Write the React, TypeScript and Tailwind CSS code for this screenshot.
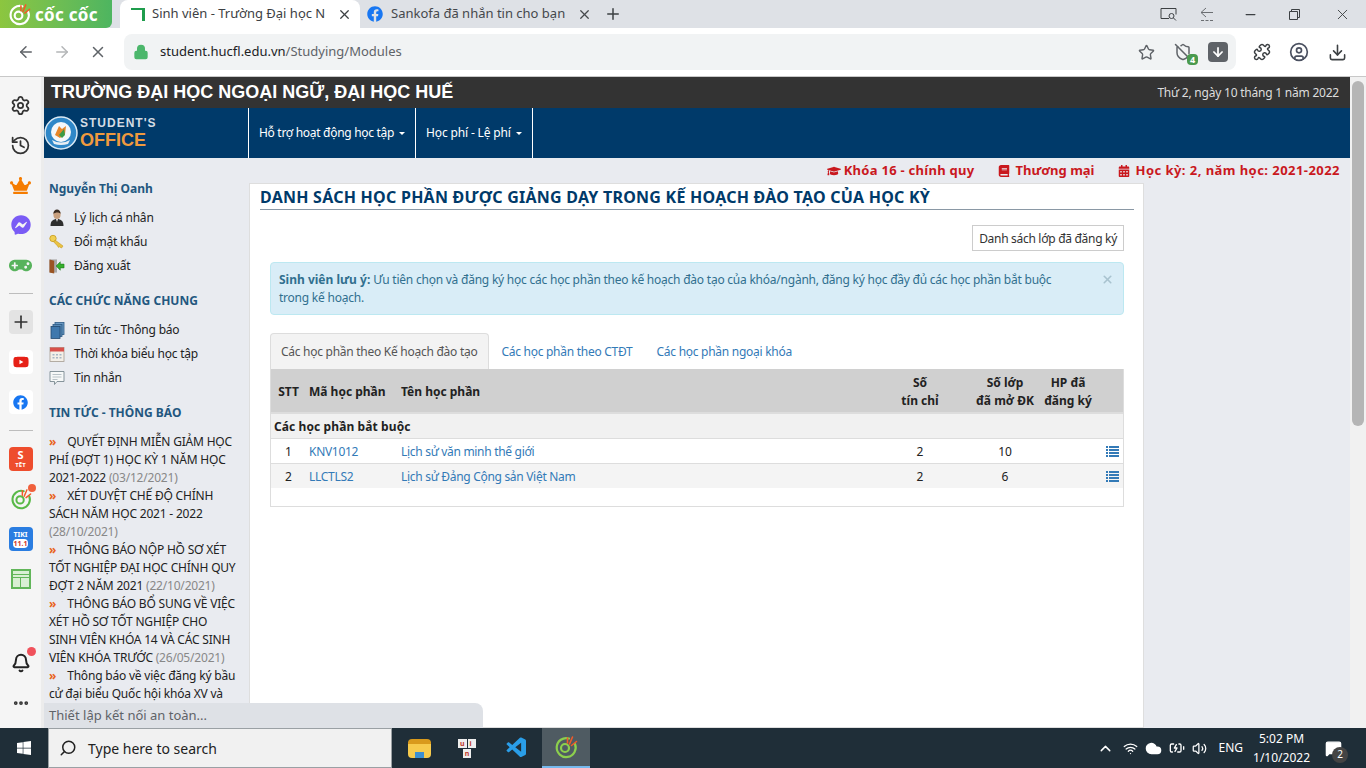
/**
 * App.tsx — Cốc Cốc browser window showing the HUCFL Student's Office modules page.
 */
import {
  ArrowDown,
  ArrowLeft,
  ArrowRight,
  Bell,
  ChevronUp,
  Cloud,
  Download,
  Ellipsis,
  History,
  Lock,
  MessageSquare,
  Minus,
  Plus,
  Search,
  Settings,
  ShieldOff,
  Star,
  UserCircle,
  Volume2,
  Wifi,
  X,
  Puzzle,
  BatteryCharging,
} from 'lucide-react';
import { FaFacebook, FaFacebookMessenger, FaWindows, FaYoutube, FaBook, FaCalendarAlt, FaGraduationCap, FaCrown, FaGamepad } from 'react-icons/fa';
import { VscVscode } from 'react-icons/vsc';

// ── Data ──────────────────────────────────────────────────────────────────────

const news = [
  { lines: ['QUYẾT ĐỊNH MIỄN GIẢM HỌC', 'PHÍ (ĐỢT 1) HỌC KỲ 1 NĂM HỌC', '2021-2022'], date: '(03/12/2021)', dateOwnLine: false },
  { lines: ['XÉT DUYỆT CHẾ ĐỘ CHÍNH', 'SÁCH NĂM HỌC 2021 - 2022'], date: '(28/10/2021)', dateOwnLine: true },
  { lines: ['THÔNG BÁO NỘP HỒ SƠ XÉT', 'TỐT NGHIỆP ĐẠI HỌC CHÍNH QUY', 'ĐỢT 2 NĂM 2021'], date: '(22/10/2021)', dateOwnLine: false },
  { lines: ['THÔNG BÁO BỔ SUNG VỀ VIỆC', 'XÉT HỒ SƠ TỐT NGHIỆP CHO', 'SINH VIÊN KHÓA 14 VÀ CÁC SINH', 'VIÊN KHÓA TRƯỚC'], date: '(26/05/2021)', dateOwnLine: false },
  { lines: ['Thông báo về việc đăng ký bầu', 'cử đại biểu Quốc hội khóa XV và'], date: '', dateOwnLine: false },
];

// ── Small drawings ────────────────────────────────────────────────────────────

function CocCocMark({ size = 20, color = '#fff' }: { size?: number; color?: string }) {
  return (
    <svg width={size} height={size} viewBox="0 0 24 24" fill="none" aria-hidden="true">
      <path d="M15 3.5A9.5 9.5 0 1 0 21 9" stroke={color} strokeWidth="2.2" strokeLinecap="round" />
      <circle cx="11" cy="13" r="4" stroke={color} strokeWidth="2.2" />
      <path d="M15.5 9l3-7M17.5 10.5l5-4M13.5 8l0-5" stroke="#f15a29" strokeWidth="1.6" strokeLinecap="round" />
    </svg>
  );
}

function SchoolLogo() {
  return (
    <svg width="34" height="34" viewBox="0 0 34 34" aria-hidden="true" className="shrink-0">
      <circle cx="17" cy="17" r="16" fill="#2f87c8" stroke="#dbeaf5" strokeWidth="1.5" />
      <circle cx="17" cy="16" r="10" fill="#f4f7fa" />
      <path d="M11 19l4-9 3 3 4-3-1 8-5 4z" fill="#e8862a" />
      <path d="M15 19l5-6 1 6-3 3z" fill="#3b9b45" />
      <path d="M8 24q9 5 18 0l-2 4q-7 2-14 0z" fill="#e9eef3" />
    </svg>
  );
}

function PersonIcon() {
  return (
    <svg width="16" height="18" viewBox="0 0 16 18" aria-hidden="true">
      <path d="M1.5 17c0-5 2.5-7 6.5-7s6.5 2 6.5 7z" fill="#2e2e2e" />
      <ellipse cx="8" cy="5.5" rx="3.6" ry="4.5" fill="#c9a07e" />
      <path d="M4.4 5c0-3 1.6-4.5 3.6-4.5s3.6 1.5 3.6 4.5c-1-2-5.5-2-7.2 0z" fill="#3a2c22" />
      <path d="M7 10l1 3 1-3z" fill="#eee" />
    </svg>
  );
}

function KeyIcon() {
  return (
    <svg width="16" height="16" viewBox="0 0 16 16" aria-hidden="true">
      <circle cx="4" cy="4.5" r="3.2" fill="#f0cf52" stroke="#c79a1e" strokeWidth="0.8" />
      <path d="M6 6l8 6-1.5 2-2-1.2-1 .6-1-1.5L4.800 8z" fill="#e9c243" stroke="#c79a1e" strokeWidth="0.6" />
    </svg>
  );
}

function DoorIcon() {
  return (
    <svg width="17" height="16" viewBox="0 0 17 16" aria-hidden="true">
      <path d="M0.5 1h8v14h-8z" fill="#a9a9a9" />
      <path d="M0.5 1l5 1.5V16l-5-1z" fill="#9a5423" />
      <path d="M16 6h-4V3.5L7.5 8l4.5 4.5V10h4z" fill="#35b02c" stroke="#1f7a1a" strokeWidth="0.6" />
    </svg>
  );
}

function BooksIcon() {
  return (
    <svg width="15" height="17" viewBox="0 0 15 17" aria-hidden="true">
      <rect x="5" y="0.5" width="9" height="12" fill="#6c9ac4" stroke="#2c5a85" strokeWidth="0.8" />
      <rect x="3" y="2.5" width="9" height="12" fill="#5789b6" stroke="#2c5a85" strokeWidth="0.8" />
      <rect x="1" y="4.5" width="9" height="12" fill="#3f78ad" stroke="#234a70" strokeWidth="0.8" />
    </svg>
  );
}

function CalendarIcon() {
  return (
    <svg width="16" height="16" viewBox="0 0 16 16" aria-hidden="true">
      <rect x="1" y="1.5" width="14" height="14" fill="#f3efe8" stroke="#a59c91" strokeWidth="0.8" />
      <rect x="1" y="1.5" width="14" height="4" fill="#d8504b" />
      <path d="M3.5 8h2v1.5h-2zM7 8h2v1.5H7zM10.5 8h2v1.5h-2zM3.5 11h2v1.5h-2zM7 11h2v1.5H7zM10.5 11h2v1.5h-2z" fill="#a7b6c4" />
    </svg>
  );
}

function ChatIcon() {
  return (
    <svg width="16" height="16" viewBox="0 0 16 16" fill="none" aria-hidden="true">
      <path d="M1 1.5h14v10H8l-2.5 3v-3H1z" fill="#f6f8f8" stroke="#7b8a92" strokeWidth="0.9" />
      <path d="M3.5 4.5h9M3.5 7h9M3.5 9.5h5" stroke="#aab4ba" strokeWidth="0.8" />
    </svg>
  );
}

function ListGlyph() {
  return (
    <svg width="13" height="11" viewBox="0 0 13 11" fill="#337ab7" aria-hidden="true" className="ml-auto mr-[4px]">
      <path d="M0 0h2v2H0zM3 0h10v2H3zM0 3h2v2H0zM3 3h10v2H3zM0 6h2v2H0zM3 6h10v2H3zM0 9h2v2H0zM3 9h10v2H3z" />
    </svg>
  );
}

function SidebarAppIcon({ children }: { children: React.ReactNode }) {
  return <div className="flex h-10 w-[41px] shrink-0 items-center justify-center">{children}</div>;
}

function SidebarDivider() {
  return (
    <div className="flex h-[17px] w-[41px] shrink-0 items-center justify-center">
      <div className="h-px w-6 bg-[#bdbdbd]" />
    </div>
  );
}

// ── Browser chrome ────────────────────────────────────────────────────────────

function TabStrip() {
  return (
    <div className="flex h-[28px] shrink-0 items-stretch bg-[#dee1e6] text-[13px]">
      <div className="flex w-[112px] items-center gap-[4px] rounded-br-md bg-gradient-to-r from-[#8cc63f] to-[#4db560] pl-2 text-white">
        <CocCocMark size={23} />
        <span className="whitespace-nowrap text-[17px] font-bold leading-none tracking-[0.3px]">cốc cốc</span>
      </div>
      <div className="ml-2 flex w-[240px] items-center rounded-t-lg bg-white pl-[11px] pr-2 text-[#3c4043]">
        <span className="mr-[7px] h-[13px] w-[14px] border-r-[3px] border-t-[2px] border-[#1f9d4d]" />
        <span className="w-[175px] overflow-hidden whitespace-nowrap">Sinh viên - Trường Đại học N</span>
        <X size={15} className="ml-auto text-[#3c4043]" />
      </div>
      <div className="flex w-[240px] items-center pl-[7px] pr-2 text-[#45484c]">
        <FaFacebook size={16} className="mr-[8px] text-[#1877f2]" />
        <span className="w-[180px] overflow-hidden whitespace-nowrap">Sankofa đã nhắn tin cho bạn</span>
        <X size={15} className="ml-auto text-[#45484c]" />
      </div>
      <div className="flex w-[26px] items-center justify-center">
        <Plus size={18} className="text-[#3c4043]" />
      </div>
      <div className="ml-auto flex items-center text-[#3c4043]">
        {/* Screen search */}
        <svg width="17" height="15" viewBox="0 0 17 15" fill="none" stroke="currentColor" strokeWidth="1" className="mr-[23px]" aria-hidden="true">
          <path d="M9 11.5H1V1.5h15v6" />
          <circle cx="11.5" cy="9" r="2.5" />
          <path d="M13.5 11l2.5 2.5" />
        </svg>
        {/* Back with dashes */}
        <svg width="14" height="15" viewBox="0 0 14 15" fill="none" stroke="#6b6e72" strokeWidth="1" className="mr-[29px]" aria-hidden="true">
          <path d="M6 1L1 5.5l5 4.5M1 5.5h12M1 13.5h3M5.5 13.5h3M10 13.5h3" />
        </svg>
        <Minus size={15} className="mr-[31px]" />
        {/* Restore */}
        <svg width="11" height="11" viewBox="0 0 11 11" fill="none" stroke="currentColor" strokeWidth="1" className="mr-[34px]" aria-hidden="true">
          <path d="M0.5 2.5h8v8h-8zM2.5 2.5v-2h8v8h-2" />
        </svg>
        <X size={17} className="mr-[15px]" strokeWidth={1.3} />
      </div>
    </div>
  );
}

function Toolbar() {
  return (
    <div className="flex h-[49px] shrink-0 items-center border-b border-[#c8c8c8] bg-white text-[#5f6368]">
      <ArrowLeft size={18} className="ml-[17px]" />
      <ArrowRight size={18} className="ml-[18px] text-[#b4b6b8]" />
      <X size={18} className="ml-[18px]" />
      <div className="ml-[17px] flex h-9 w-[1112px] items-center rounded-lg bg-[#f1f3f4] pl-[9px]">
        <Lock size={16} className="text-[#4cb76c]" fill="#4cb76c" />
        <span className="ml-[11px] text-[13px]">
          <span className="text-[#202124]">student.hucfl.edu.vn</span>
          <span className="text-[#5f6368]">/Studying/Modules</span>
        </span>
        <Star size={17} className="ml-auto mr-[19px]" />
        <div className="relative mr-[16px]">
          <ShieldOff size={18} />
          <span className="absolute -bottom-1 -right-[6px] flex h-[11px] w-[11px] items-center justify-center rounded-sm bg-[#4a9a4e] text-[9px] font-bold text-white">4</span>
        </div>
        <div className="mr-[8px] flex h-5 w-5 items-center justify-center rounded-sm bg-[#5f6368]">
          <ArrowDown size={14} className="text-white" strokeWidth={3} />
        </div>
      </div>
      <Puzzle size={18} className="ml-[17px] text-[#3c4043]" />
      <UserCircle size={20} className="ml-[18px] text-[#4a5060]" />
      <Download size={19} className="ml-[19px] text-[#3c4043]" />
    </div>
  );
}

function AppRail() {
  return (
    <div className="flex w-[44px] shrink-0 flex-col border-r-[3px] border-[#ececec] bg-[#f5f5f5] pb-[5px] pt-[8px] text-[#333]">
      <SidebarAppIcon><Settings size={21} /></SidebarAppIcon>
      <SidebarAppIcon><History size={21} /></SidebarAppIcon>
      <SidebarAppIcon><FaCrown size={21} className="text-[#f57c00]" /></SidebarAppIcon>
      <SidebarAppIcon><FaFacebookMessenger size={20} className="text-[#7a5cf5]" /></SidebarAppIcon>
      <SidebarAppIcon><FaGamepad size={23} className="text-[#58b35c]" /></SidebarAppIcon>
      <SidebarDivider />
      <SidebarAppIcon>
        <div className="flex h-6 w-6 items-center justify-center rounded bg-[#e3e3e3]"><Plus size={20} /></div>
      </SidebarAppIcon>
      <SidebarAppIcon>
        <div className="flex h-6 w-6 items-center justify-center rounded bg-white"><FaYoutube size={16} className="text-[#e62117]" /></div>
      </SidebarAppIcon>
      <SidebarAppIcon>
        <div className="flex h-6 w-6 items-center justify-center rounded bg-white"><FaFacebook size={15} className="text-[#1877f2]" /></div>
      </SidebarAppIcon>
      <SidebarDivider />
      <SidebarAppIcon>
        <div className="flex h-6 w-6 flex-col items-center justify-center rounded bg-[#ee4d2d] text-[6px] font-bold leading-[8px] text-white">
          <span className="text-[11px] leading-[12px]">S</span>
          <span>TẾT</span>
        </div>
      </SidebarAppIcon>
      <SidebarAppIcon>
        <div className="relative">
          <CocCocMark size={22} color="#58b947" />
          <span className="absolute -right-1 -top-1 h-2 w-2 rounded-full bg-[#f0603c]" />
        </div>
      </SidebarAppIcon>
      <SidebarAppIcon>
        <div className="flex h-6 w-6 flex-col items-center justify-center rounded bg-[#2a7de1] text-[7px] font-bold leading-[9px] text-white">
          <span>TIKI</span>
          <span className="rounded-sm bg-white px-px text-[#d0342c]">11.1</span>
        </div>
      </SidebarAppIcon>
      <SidebarAppIcon>
        <div className="flex h-5 w-5 flex-col gap-px bg-[#62b65a] p-[2px]">
          <div className="h-[3px] bg-[#d9efd4]" />
          <div className="h-[2px] bg-[#d9efd4]" />
          <div className="flex flex-1 gap-px">
            <div className="flex-1 bg-[#d9efd4]" />
            <div className="flex-1 bg-[#d9efd4]" />
          </div>
        </div>
      </SidebarAppIcon>
      <div className="flex-1" />
      <SidebarAppIcon>
        <div className="relative">
          <Bell size={20} className="text-[#222]" strokeWidth={2.4} />
          <span className="absolute -right-[5px] -top-[6px] h-[9px] w-[9px] rounded-full bg-[#f0525c]" />
        </div>
      </SidebarAppIcon>
      <SidebarAppIcon><Ellipsis size={18} strokeWidth={3} /></SidebarAppIcon>
    </div>
  );
}

// ── Site header ───────────────────────────────────────────────────────────────

function SiteHeader() {
  return (
    <>
      <div className="flex h-[31px] shrink-0 items-center justify-between bg-[#333] pl-[7px] pr-[11px]">
        <span className="text-[18px] font-bold text-white font-['Liberation_Sans',sans-serif]">TRƯỜNG ĐẠI HỌC NGOẠI NGỮ, ĐẠI HỌC HUẾ</span>
        <span className="text-[12px] tracking-[-0.22px] text-[#ddd]">Thứ 2, ngày 10 tháng 1 năm 2022</span>
      </div>
      <div className="flex h-[50px] shrink-0 bg-[#003a6a] text-[12px] text-white">
        <div className="flex w-[204px] items-center">
          <SchoolLogo />
          <div className="ml-[2px] flex flex-col font-['Liberation_Sans',sans-serif] font-bold">
            <span className="text-[12px] leading-[14px] tracking-[1px] text-[#d5dce4]">STUDENT'S</span>
            <span className="text-[18px] leading-[21px] text-[#f09a3e]">OFFICE</span>
          </div>
        </div>
        <div className="flex items-center border-x border-white px-[10px] tracking-[-0.3px]">
          Hỗ trợ hoạt động học tập
          <span className="ml-[5px] mt-[1px] border-x-[3px] border-t-[3px] border-x-transparent border-t-white" />
        </div>
        <div className="flex items-center border-r border-white px-[10px] tracking-[-0.15px]">
          Học phí - Lệ phí
          <span className="ml-[5px] mt-[1px] border-x-[3px] border-t-[3px] border-x-transparent border-t-white" />
        </div>
      </div>
      <div className="flex h-[25px] shrink-0 items-center justify-end gap-[24px] pr-[10px] text-[13px] font-bold text-[#c9181e]">
        <span className="flex items-center gap-[3px] tracking-[0.27px]"><FaGraduationCap size={14} /> Khóa 16 - chính quy</span>
        <span className="flex items-center gap-[5px]"><FaBook size={12} /> Thương mại</span>
        <span className="flex items-center gap-[5px] tracking-[0.45px]"><FaCalendarAlt size={12} /> Học kỳ: 2, năm học: 2021-2022</span>
      </div>
    </>
  );
}

// ── Left column ───────────────────────────────────────────────────────────────

function LeftColumn() {
  return (
    <div className="-mt-[3px] w-[205px] shrink-0 overflow-hidden pl-[5px] text-[12px] tracking-[-0.2px] text-[#222]">
      <div className="text-[12px] font-bold leading-[18px] tracking-normal text-[#23577f]">Nguyễn Thị Oanh</div>
      <ul className="mt-[11px] flex flex-col gap-[6px]">
        <li className="flex h-[18px] items-center gap-[9px]">
          <span className="flex w-4 justify-center"><PersonIcon /></span>Lý lịch cá nhân
        </li>
        <li className="flex h-[18px] items-center gap-[9px]">
          <span className="flex w-4 justify-center"><KeyIcon /></span>Đổi mật khẩu
        </li>
        <li className="flex h-[18px] items-center gap-[9px]">
          <span className="flex w-4 justify-center"><DoorIcon /></span>Đăng xuất
        </li>
      </ul>
      <div className="mt-[17px] text-[12px] font-bold leading-[18px] tracking-normal text-[#23577f]">CÁC CHỨC NĂNG CHUNG</div>
      <ul className="mt-[11px] flex flex-col gap-[6px]">
        <li className="flex h-[18px] items-center gap-[9px]">
          <span className="flex w-4 justify-center"><BooksIcon /></span>Tin tức - Thông báo
        </li>
        <li className="flex h-[18px] items-center gap-[9px]">
          <span className="flex w-4 justify-center"><CalendarIcon /></span>Thời khóa biểu học tập
        </li>
        <li className="flex h-[18px] items-center gap-[9px]">
          <span className="flex w-4 justify-center"><ChatIcon /></span>Tin nhắn
        </li>
      </ul>
      <div className="mt-[17px] text-[12px] font-bold leading-[18px] tracking-normal text-[#23577f]">TIN TỨC - THÔNG BÁO</div>
      <div className="mt-[11px] leading-[18px]">
        {news.map((item) => (
          <div key={item.lines[0]}>
            {item.lines.map((line, i) => (
              <div key={line} className="whitespace-nowrap">
                {i === 0 && <span className="mr-[11px] font-bold text-[#e8641b]">»</span>}
                {line}
                {i === item.lines.length - 1 && !item.dateOwnLine && item.date && (
                  <span className="text-[#888]"> {item.date}</span>
                )}
              </div>
            ))}
            {item.dateOwnLine && <div className="text-[#888]">{item.date}</div>}
          </div>
        ))}
      </div>
    </div>
  );
}

// ── Main panel ────────────────────────────────────────────────────────────────

function ModulesPanel() {
  const cellLink = 'text-[#337ab7] tracking-[-0.3px]';
  return (
    <div className="w-[895px] shrink-0 border border-[#dedede] bg-white pl-[10px] pr-[9px] pt-[2px] text-[12px]">
      <h1 className="border-b border-[#8a98a5] pb-[1px] text-[16px] font-bold leading-[22px] tracking-[0.25px] text-[#003a6a]">
        DANH SÁCH HỌC PHẦN ĐƯỢC GIẢNG DẠY TRONG KẾ HOẠCH ĐÀO TẠO CỦA HỌC KỲ
      </h1>
      <div className="mr-[10px] mt-[15px] flex justify-end">
        <span className="flex h-[26px] items-center border border-[#ccc] px-[6px] pt-px tracking-[-0.3px] text-[#333]">Danh sách lớp đã đăng ký</span>
      </div>
      <div className="relative mx-[10px] mt-[11px] h-[53px] rounded-sm border border-[#bce8f1] bg-[#d9edf7] pl-2 pt-[8px] leading-[18px] tracking-[-0.23px] text-[#31708f]">
        <b className="tracking-normal">Sinh viên lưu ý:</b> Ưu tiên chọn và đăng ký học các học phần theo kế hoạch đào tạo của khóa/ngành, đăng ký học đầy đủ các học phần bắt buộc
        <br />
        trong kế hoạch.
        <X size={13} className="absolute right-[9px] top-[10px] text-[#a8c3cf]" strokeWidth={3} />
      </div>
      <div className="mx-[10px] mt-[18px] flex h-[36px] items-center tracking-[-0.27px] text-[#337ab7]">
        <span className="flex h-full items-center rounded-t-sm border border-b-0 border-[#ddd] bg-[#f3f3f3] pl-[10px] pr-[11px] pt-px text-[#555]">Các học phần theo Kế hoạch đào tạo</span>
        <span className="px-[12px] pt-px">Các học phần theo CTĐT</span>
        <span className="px-[12px] pt-px">Các học phần ngoại khóa</span>
      </div>
      <div className="mx-[10px] border border-t-0 border-[#ddd]">
        <table className="w-full table-fixed border-collapse text-[#222] [&_td]:pt-[2px] [&_th]:pt-[2px]">
          <thead>
            <tr className="h-[44px] border-b-2 border-[#ddd] bg-[#d0d0d0]">
              <th className="w-[35px] text-center font-bold">STT</th>
              <th className="w-[95px] pl-[3px] text-left font-bold">Mã học phần</th>
              <th className="text-left font-bold">Tên học phần</th>
              <th className="w-[94px] text-center font-bold">Số<br />tín chỉ</th>
              <th className="w-[76px] text-center font-bold">Số lớp<br />đã mở ĐK</th>
              <th className="w-[52px] pr-[2px] text-center font-bold">HP đã<br />đăng ký</th>
              <th className="w-[28px]" />
            </tr>
          </thead>
          <tbody>
            <tr className="h-[25px] border-b border-[#ddd] bg-[#f1f1f1]">
              <td colSpan={7} className="pl-[3px] font-bold tracking-[0.1px]">Các học phần bắt buộc</td>
            </tr>
            <tr className="h-[25px] border-b border-[#ddd]">
              <td className="text-center">1</td>
              <td className={`pl-[3px] ${cellLink}`}>KNV1012</td>
              <td className={cellLink}>Lịch sử văn minh thế giới</td>
              <td className="text-center">2</td>
              <td className="text-center">10</td>
              <td />
              <td><ListGlyph /></td>
            </tr>
            <tr className="h-[25px] bg-[#f4f4f4]">
              <td className="text-center">2</td>
              <td className={`pl-[3px] ${cellLink}`}>LLCTLS2</td>
              <td className={cellLink}>Lịch sử Đảng Cộng sản Việt Nam</td>
              <td className="text-center">2</td>
              <td className="text-center">6</td>
              <td />
              <td><ListGlyph /></td>
            </tr>
            <tr className="h-[18px]"><td colSpan={7} /></tr>
          </tbody>
        </table>
      </div>
    </div>
  );
}

// ── Taskbar ───────────────────────────────────────────────────────────────────

function Taskbar() {
  return (
    <div className="flex h-10 shrink-0 items-stretch bg-[#1f2e38] text-white">
      <div className="flex w-[48px] items-center justify-center">
        <FaWindows size={16} />
      </div>
      <div className="flex w-[344px] items-center border border-[#9aa0a4] bg-[#f1f1f1] pl-[10px] text-[14px] text-[#222]">
        <Search size={18} className="mr-[11px] -scale-x-100" />
        Type here to search
      </div>
      <div className="ml-[3px] flex w-[48px] items-center justify-center">
        <span className="relative h-[19px] w-[23px] rounded-sm border-t-[5px] border-[#d99a1c] bg-[#f7cb4d]">
          <span className="absolute bottom-0 left-[7px] h-[6px] w-[9px] bg-[#3d8fd1]" />
        </span>
      </div>
      <div className="flex w-[48px] items-center justify-center">
        <span className="grid grid-cols-2 gap-px text-[7px] font-bold leading-[9px] text-[#c0392b]">
          <span className="bg-[#eee] px-[2px]">u</span>
          <span className="bg-[#eee] px-[2px]">i</span>
          <span className="col-span-2 mx-auto bg-[#eee] px-[2px]">n</span>
        </span>
      </div>
      <div className="flex w-[51px] items-center justify-center">
        <VscVscode size={24} className="text-[#2a9ee8]" />
      </div>
      <div className="flex w-[48px] items-center justify-center border-b-2 border-[#76b9ed] bg-[#4f5b62]">
        <CocCocMark size={24} color="#8ccf4d" />
      </div>
      <div className="ml-auto flex items-center">
        <ChevronUp size={17} className="mr-[9px]" />
        <Wifi size={15} className="mr-[7px]" />
        <Cloud size={17} className="mr-[7px]" fill="#fff" />
        <BatteryCharging size={16} className="mr-[7px]" />
        <Volume2 size={15} className="mr-[11px]" />
        <span className="mr-[10px] text-[12px]">ENG</span>
        <div className="mr-[15px] flex flex-col items-end text-center text-[12px] leading-[19px]">
          <span className="w-full">5:02 PM</span>
          <span>1/10/2022</span>
        </div>
        <div className="relative mr-[24px]">
          <MessageSquare size={17} fill="#fff" />
          <span className="absolute -bottom-[6px] -right-[6px] flex h-4 w-4 items-center justify-center rounded-full bg-[#444] text-[10px]">2</span>
        </div>
      </div>
    </div>
  );
}

// ── Page ──────────────────────────────────────────────────────────────────────

export default function App() {
  return (
    <div className="flex h-[768px] w-[1366px] flex-col overflow-hidden bg-white font-['Noto_Sans',sans-serif]">
      <TabStrip />
      <Toolbar />
      <div className="relative flex min-h-0 flex-1">
        <AppRail />
        <div className="flex min-w-0 flex-1 flex-col bg-[#e9ebf0]">
          <SiteHeader />
          <div className="flex min-h-0 flex-1">
            <LeftColumn />
            <ModulesPanel />
          </div>
        </div>
        <div className="flex w-4 shrink-0 justify-center bg-[#f1f1f1] pt-[4px]">
          <div className="h-[345px] w-3 rounded-full bg-[#b5b5b5]" />
        </div>
        <div className="absolute bottom-0 left-[44px] flex h-[25px] w-[439px] items-center rounded-tr-lg bg-[#dee1e6] pl-[5px] text-[13px] text-[#5f6368]">
          Thiết lập kết nối an toàn...
        </div>
      </div>
      <Taskbar />
    </div>
  );
}
